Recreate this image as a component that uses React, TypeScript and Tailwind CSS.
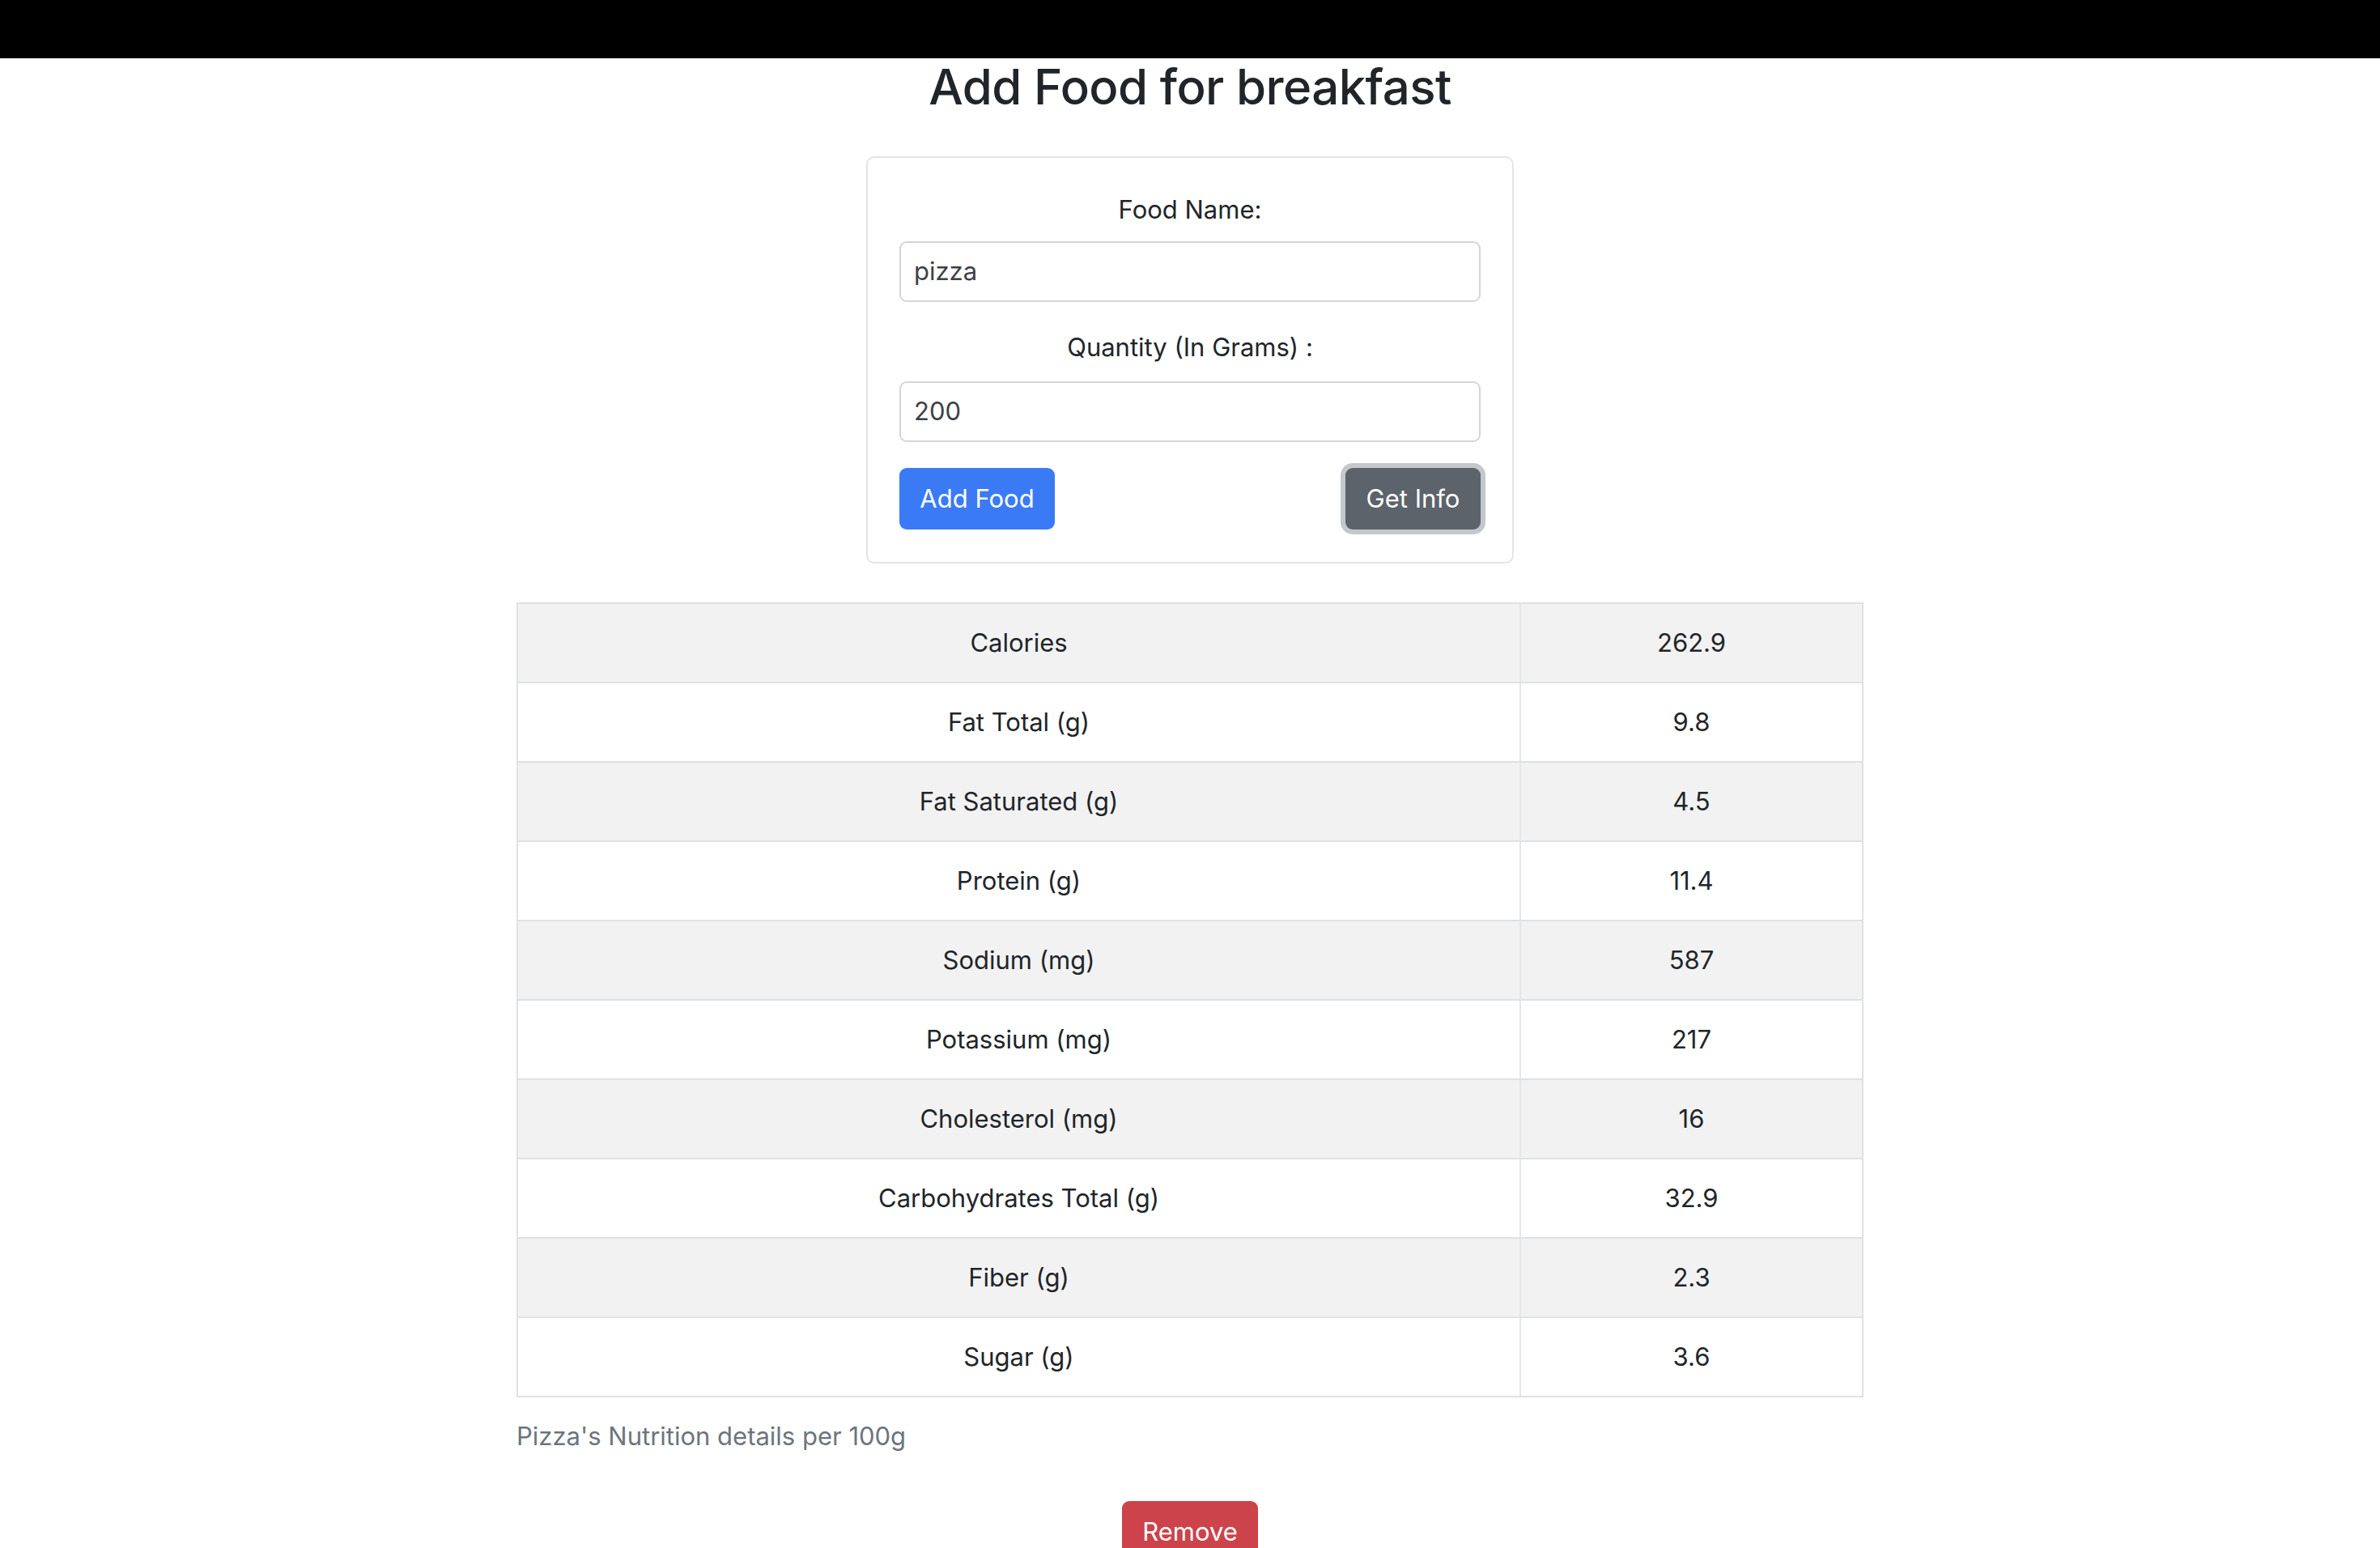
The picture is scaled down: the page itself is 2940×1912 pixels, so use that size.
import React from "react";

const rows: [string, string][] = [
  ["Calories", "262.9"],
  ["Fat Total (g)", "9.8"],
  ["Fat Saturated (g)", "4.5"],
  ["Protein (g)", "11.4"],
  ["Sodium (mg)", "587"],
  ["Potassium (mg)", "217"],
  ["Cholesterol (mg)", "16"],
  ["Carbohydrates Total (g)", "32.9"],
  ["Fiber (g)", "2.3"],
  ["Sugar (g)", "3.6"],
];

export default function App() {
  return (
    <div className="min-h-[1912px] bg-white font-['Inter',sans-serif] text-[#212529]">
      <div className="h-[72px] bg-black" />
      <h2 className="text-center text-[60px] font-medium leading-[70px] tracking-[-0.01em]">
        Add Food for breakfast
      </h2>
      <div className="mx-auto mt-[51px] w-[800px] rounded-[10px] border-2 border-[#e2e4e7] px-[39px] pt-[40px] pb-[40px]">
        <div className="text-center text-[31px] leading-[48px]">Food Name:</div>
        <div className="mt-[15px] flex h-[75px] items-center rounded-[9px] border-2 border-[#d3d6d9] px-[16px] text-[31px] text-[#3c4147]">
          pizza
        </div>
        <div className="mt-[32px] text-center text-[31px] leading-[48px]">Quantity (In Grams) :</div>
        <div className="mt-[18px] flex h-[75px] items-center rounded-[9px] border-2 border-[#d3d6d9] px-[16px] text-[31px] text-[#3c4147]">
          200
        </div>
        <div className="mt-[32px] flex items-center justify-between">
          <button className="flex h-[76px] w-[192px] items-center justify-center rounded-[9px] bg-[#3a7bf5] text-[31px] text-white">
            Add Food
          </button>
          <button className="flex h-[76px] w-[167px] items-center justify-center rounded-[9px] bg-[#5c636a] text-[31px] text-white ring-[6px] ring-[#c4c7cb]">
            Get Info
          </button>
        </div>
      </div>
      <div className="mx-auto mt-[48px] w-[1664px] border-x-2 border-t-2 border-[#dee2e6]">
        {rows.map(([k, v], i) => (
          <div
            key={k}
            className={`flex h-[98px] border-b-2 border-[#dee2e6] text-[31px] ${i % 2 === 0 ? "bg-[#f2f2f2]" : "bg-white"}`}
          >
            <div className="flex w-[1239px] items-center justify-center border-r-2 border-[#e4e7ea]">{k}</div>
            <div className="flex flex-1 items-center justify-center">{v}</div>
          </div>
        ))}
      </div>
      <div className="mx-auto mt-[24px] w-[1664px] text-[31px] leading-[48px] text-[#6c757d]">
        Pizza's Nutrition details per 100g
      </div>
      <div className="mt-[56px] flex justify-center">
        <button className="flex h-[76px] w-[168px] items-center justify-center rounded-[9px] bg-[#cc434b] text-[31px] text-white">
          Remove
        </button>
      </div>
    </div>
  );
}
